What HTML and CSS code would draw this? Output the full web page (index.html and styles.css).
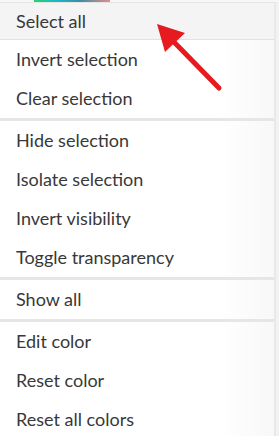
FILE: index.html
```html
<!DOCTYPE html>
<html>
  <head>
    <title>Context menu</title>
    <meta name="viewport" content="width=device-width">
    <link rel="stylesheet" href="styles.css">
  </head>
  <body>
    <div class="strip"><span class="swatch"></span></div>
    <div class="page">
      <ul class="menu">
        <li class="item active">Select all</li>
        <li class="item">Invert selection</li>
        <li class="item">Clear selection</li>
        <li class="sep"></li>
        <li class="item">Hide selection</li>
        <li class="item">Isolate selection</li>
        <li class="item">Invert visibility</li>
        <li class="item">Toggle transparency</li>
        <li class="sep"></li>
        <li class="item">Show all</li>
        <li class="sep"></li>
        <li class="item">Edit color</li>
        <li class="item">Reset color</li>
        <li class="item">Reset all colors</li>
      </ul>
      <svg class="arrow" width="80" height="80" viewBox="150 20 80 80">
        <line x1="172" y1="41" x2="219" y2="89" stroke="#e61b1f" stroke-width="5" stroke-linecap="round" />
        <polygon points="157,25 185,34 165,53" fill="#e61b1f" />
      </svg>
    </div>
  </body>
</html>
```
FILE: styles.css
```css
* { margin: 0; padding: 0; }
body {
  font-family: Lato, "Open Sans", sans-serif;
  background-color: #f2f2f2;
  height: 100vh;
  overflow: hidden;
}

.strip {
  height: 2px;
  background-color: #f7f7f7;
  display: flex;
}
.swatch {
  margin-left: 34px;
  width: 76px;
  background: linear-gradient(to right, #1fd96a, #1bb7c9 30%, #3a8fa0 60%, #e88b8b);
}

.page {
  position: relative;
}

.menu {
  list-style: none;
  width: 274px;
  background: linear-gradient(to right, #fff 80%, #f8f8f8);
  border-top: 1px solid #e4e4e4;
  border-right: 2px solid #e9e9e9;
}

.item {
  height: 39px;
  line-height: 39px;
  padding-left: 16px;
  font-size: 18px;
  color: #383838;
}
.item.active {
  height: 36px;
  line-height: 36px;
  background-color: #f4f4f4;
  border-bottom: 1px solid #e2e2e2;
}

.sep {
  height: 3px;
  background-color: #e6e6e6;
}

.arrow {
  position: absolute;
  left: 150px;
  top: 17px;
}
```
